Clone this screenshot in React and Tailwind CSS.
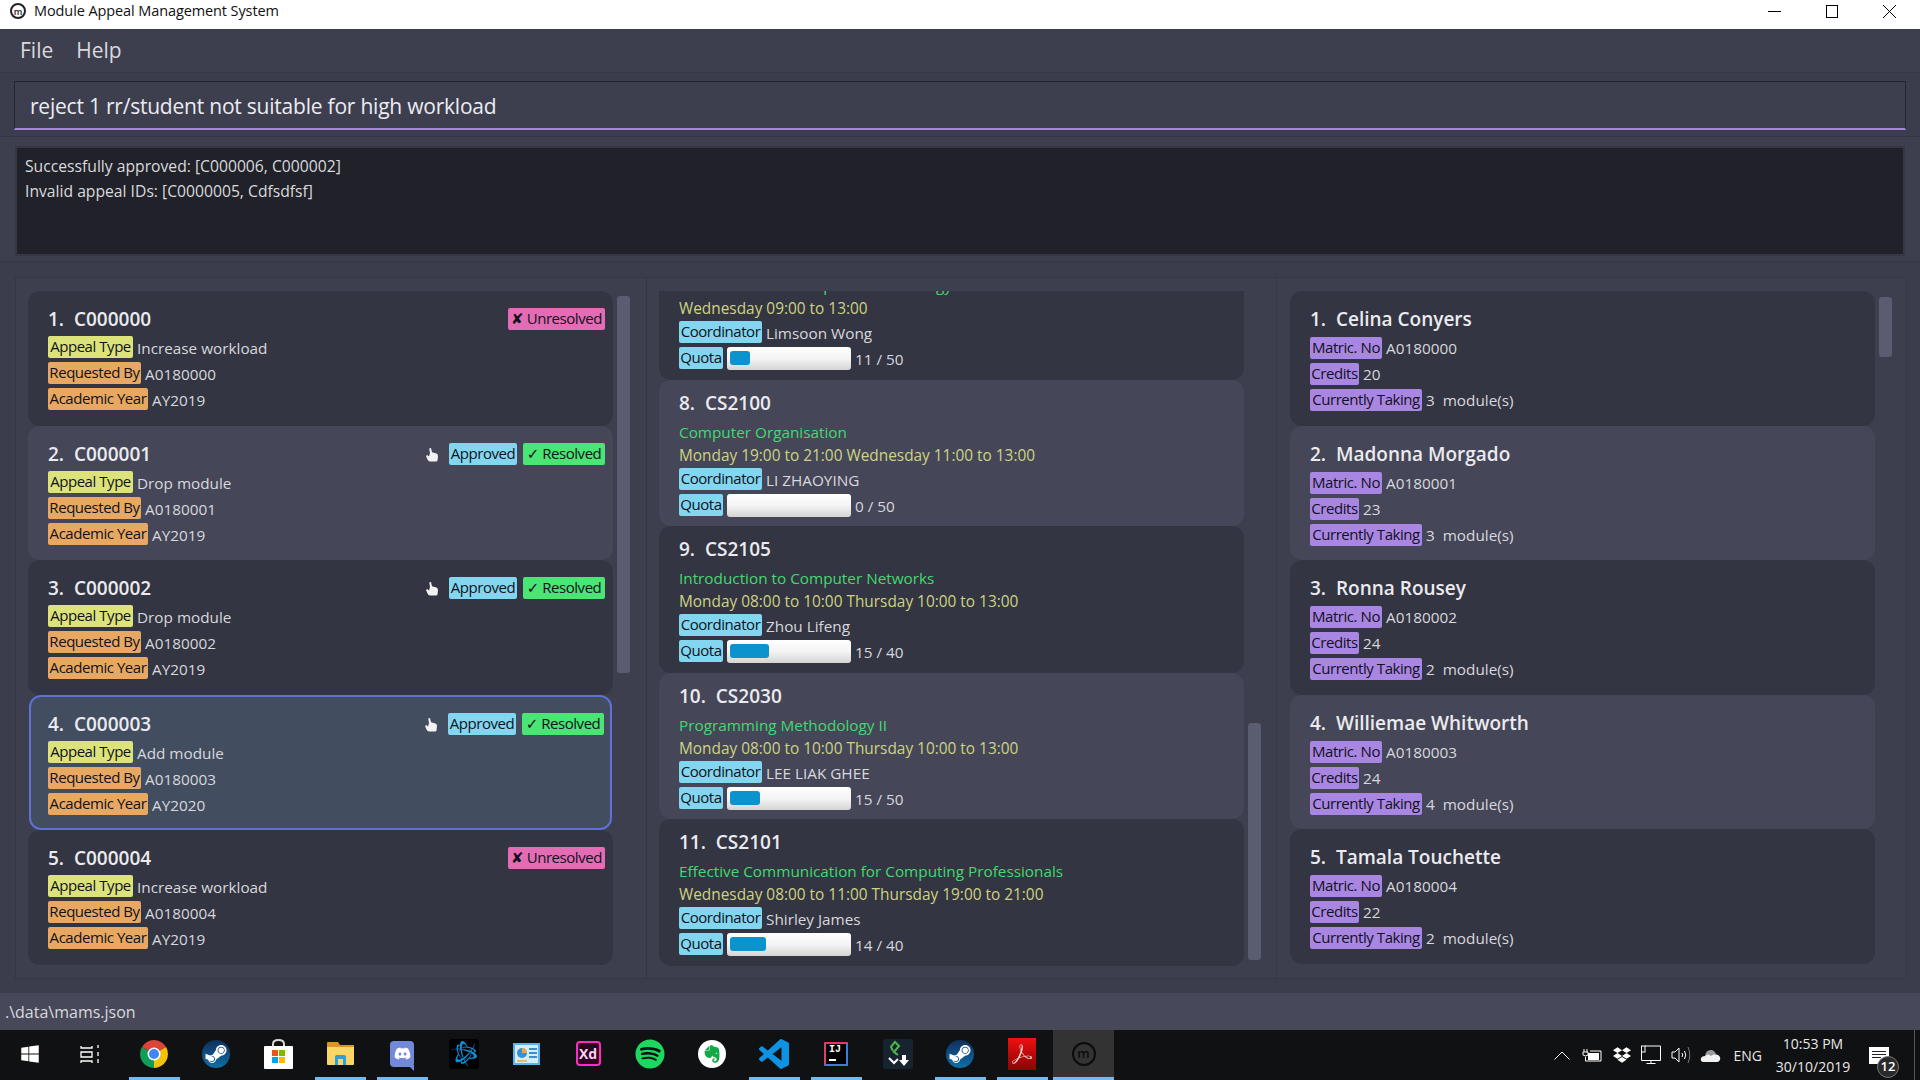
import React from 'react';
import { FaWindows, FaSteamSymbol, FaDiscord, FaBattleNet, FaSpotify, FaEvernote, FaDropbox } from 'react-icons/fa6';
import { SiAdobeacrobatreader } from 'react-icons/si';

const APPEALS = [
  { id: 'C000000', type: 'Increase workload', by: 'A0180000', year: 'AY2019', approved: false },
  { id: 'C000001', type: 'Drop module', by: 'A0180001', year: 'AY2019', approved: true },
  { id: 'C000002', type: 'Drop module', by: 'A0180002', year: 'AY2019', approved: true },
  { id: 'C000003', type: 'Add module', by: 'A0180003', year: 'AY2020', approved: true, selected: true },
  { id: 'C000004', type: 'Increase workload', by: 'A0180004', year: 'AY2019', approved: false }
];

const MODULES = [
  { no: 7, code: 'CS2220', name: 'Introduction to Computational Biology', time: 'Wednesday 09:00 to 13:00', lead: 'Limsoon Wong', quota: '11 / 50', fill: 20 },
  { no: 8, code: 'CS2100', name: 'Computer Organisation', time: 'Monday 19:00 to 21:00 Wednesday 11:00 to 13:00', lead: 'LI ZHAOYING', quota: '0 / 50', fill: 0 },
  { no: 9, code: 'CS2105', name: 'Introduction to Computer Networks', time: 'Monday 08:00 to 10:00 Thursday 10:00 to 13:00', lead: 'Zhou Lifeng', quota: '15 / 40', fill: 39 },
  { no: 10, code: 'CS2030', name: 'Programming Methodology II', time: 'Monday 08:00 to 10:00 Thursday 10:00 to 13:00', lead: 'LEE LIAK GHEE', quota: '15 / 50', fill: 30 },
  { no: 11, code: 'CS2101', name: 'Effective Communication for Computing Professionals', time: 'Wednesday 08:00 to 11:00 Thursday 19:00 to 21:00', lead: 'Shirley James', quota: '14 / 40', fill: 36 }
];

const STUDENTS = [
  { name: 'Celina Conyers', matric: 'A0180000', credits: 20, taking: 3 },
  { name: 'Madonna Morgado', matric: 'A0180001', credits: 23, taking: 3 },
  { name: 'Ronna Rousey', matric: 'A0180002', credits: 24, taking: 2 },
  { name: 'Williemae Whitworth', matric: 'A0180003', credits: 24, taking: 4 },
  { name: 'Tamala Touchette', matric: 'A0180004', credits: 22, taking: 2 }
];

const Tag = ({ className, children }) => (
  <span className={`h-[22px] shrink-0 rounded-[2px] text-center text-[15px] leading-[21px] tracking-[-0.45px] whitespace-nowrap text-[#10121c] ${className}`}>
    {children}
  </span>
);

const Row = ({ tag, tagClass, value, valueClass = 'pt-[1px]' }) => (
  <div className="flex h-[22px] gap-[4px]">
    <Tag className={tagClass}>{tag}</Tag>
    <span className={`text-[15.3px] leading-[22px] whitespace-pre text-[#d8d8dc] ${valueClass}`}>{value}</span>
  </div>
);

const Title = ({ no, text }) => (
  <div className="text-[19px] leading-[24px] font-semibold whitespace-pre text-[#ebebef]">{`${no}.  ${text}`}</div>
);

const HandIcon = () => (
  <svg width="14" height="14" viewBox="0 0 14 14" className="mt-[5px] mr-[4px]">
    <path fill="#f2f2f2" d="M4.2 0.5 L6 0 L7 4.3 L11.5 5.5 Q13 6 13 8 L12.5 12.5 Q12.3 13.5 11 13.5 L5 13.5 Q3.5 13.5 2.5 11.5 L1 8 L2.2 7 L4 8.5 L5 5 Z" />
  </svg>
);

const AppealCard = ({ appeal, no }) => {
  const stripe = no % 2 === 1 ? 'bg-[#333542]' : 'bg-[#454759]';
  return (
    <div className={`shrink-0 rounded-[12px] ${
      appeal.selected
        ? 'mx-[1px] mt-[0.5px] h-[135px] border-2 border-[#5f70d8] bg-[#424e60] pt-[16px] pr-[6px] pl-[17px]'
        : `h-[134.5px] ${stripe} pt-[17px] pr-[8px] pl-[20px]`
    }`}>
      <div className="flex h-[22px] items-center justify-between">
        <Title no={no} text={appeal.id} />
        {appeal.approved ? (
          <div className="flex items-start gap-[6px]">
            <HandIcon />
            <Tag className="w-[68px] bg-[#82d6ef]">Approved</Tag>
            <Tag className="w-[82px] bg-[#4ae574]">✓ Resolved</Tag>
          </div>
        ) : (
          <Tag className="w-[97px] bg-[#e46cb4]">✘ Unresolved</Tag>
        )}
      </div>
      <div className="mt-[6px] flex flex-col gap-[4px]">
        <Row tag="Appeal Type" tagClass="w-[85px] bg-[#dde37b]" value={appeal.type} />
        <Row tag="Requested By" tagClass="w-[93px] bg-[#e8a862]" value={appeal.by} />
        <Row tag="Academic Year" tagClass="w-[100px] bg-[#e8a862]" value={appeal.year} />
      </div>
    </div>
  );
};

const ModuleCard = ({ mod }) => (
  <div className={`h-[146.5px] shrink-0 rounded-[12px] pt-[11px] pl-[20px] ${mod.no % 2 === 1 ? 'bg-[#333542]' : 'bg-[#454759]'}`}>
    <Title no={mod.no} text={mod.code} />
    <div className="mt-[5px] text-[15.3px] leading-[24px] text-[#43d96f]">{mod.name}</div>
    <div className="text-[15.4px] leading-[24px] text-[#cdd381]">{mod.time}</div>
    <div className="flex flex-col gap-[4px]">
      <Row tag="Coordinator" tagClass="w-[83px] bg-[#82d6ef]" value={mod.lead} />
      <div className="flex h-[22px] gap-[4px]">
        <Tag className="w-[44px] bg-[#82d6ef]">Quota</Tag>
        <div className="h-[23px] w-[124px] shrink-0 rounded-[3px] bg-gradient-to-b from-[#ffffff] via-[#f4f4f4] to-[#d4d4d4] px-[3px] pt-[4px]">
          <div className="h-[14px] rounded-[3px] bg-[#0a93cc]" style={{ width: mod.fill }} />
        </div>
        <span className="pt-[1px] text-[15.3px] leading-[22px] whitespace-pre text-[#d8d8dc]">{mod.quota}</span>
      </div>
    </div>
  </div>
);

const StudentCard = ({ student, no }) => (
  <div className={`h-[134.5px] shrink-0 rounded-[12px] pt-[16px] pl-[20px] ${no % 2 === 1 ? 'bg-[#333542]' : 'bg-[#454759]'}`}>
    <div className="flex h-[24px] items-center"><Title no={no} text={student.name} /></div>
    <div className="mt-[6px] flex flex-col gap-[4px]">
      <Row tag="Matric. No" tagClass="w-[72px] bg-[#aa86e3]" value={student.matric} valueClass="pt-0" />
      <Row tag="Credits" tagClass="w-[49px] bg-[#aa86e3]" value={student.credits} valueClass="pt-0" />
      <Row tag="Currently Taking" tagClass="w-[112px] bg-[#aa86e3]" value={`${student.taking}  module(s)`} valueClass="pt-0" />
    </div>
  </div>
);

const Thumb = ({ className }) => <div className={`w-[13px] shrink-0 rounded-[3px] bg-[#5a5c70] ${className}`} />;

const MIcon = ({ size, color, text }) => (
  <span className={`flex items-center justify-center rounded-full border-2 font-semibold ${size} ${color} ${text}`}>m</span>
);

// taskbar icons
const ChromeIcon = () => (
  <svg width="28" height="28" viewBox="0 0 28 28">
    <path fill="#db4437" d="M14 14 L1.9 7 A14 14 0 0 1 26.1 7 Z" />
    <path fill="#f4c20d" d="M14 14 L26.1 7 A14 14 0 0 1 14 28 Z" />
    <path fill="#0f9d58" d="M14 14 L14 28 A14 14 0 0 1 1.9 7 Z" />
    <circle cx="14" cy="14" r="6.5" fill="#fff" />
    <circle cx="14" cy="14" r="5" fill="#4285f4" />
  </svg>
);

const SteamIcon = () => (
  <span className="flex h-[28px] w-[28px] items-center justify-center rounded-full bg-gradient-to-b from-[#0f2f5c] to-[#0f6fa8]">
    <FaSteamSymbol className="h-[24px] w-[26px] text-white" />
  </span>
);

const StoreIcon = () => (
  <svg width="29" height="30" viewBox="0 0 29 30">
    <path fill="none" stroke="#d8d8d8" strokeWidth="2" d="M9 8 V5 Q9 1 14.5 1 Q20 1 20 5 V8" />
    <rect x="0" y="7" width="29" height="23" rx="1" fill="#fff" />
    <rect x="8" y="11" width="6" height="6" fill="#f25022" />
    <rect x="15" y="11" width="6" height="6" fill="#7fba00" />
    <rect x="8" y="18" width="6" height="6" fill="#00a4ef" />
    <rect x="15" y="18" width="6" height="6" fill="#ffb900" />
  </svg>
);

const FolderIcon = () => (
  <svg width="27" height="24" viewBox="0 0 27 24">
    <path fill="#d99a1c" d="M0 1 Q0 0 1 0 H11 L13 3 H27 V8 H0 Z" />
    <path fill="#fbd665" d="M0 5 H27 V22 Q27 23 26 23 H1 Q0 23 0 22 Z" />
    <path fill="#2b9fe0" d="M8 23 V15 Q8 13 10 13 H17 Q19 13 19 15 V23 H16 V17 H11 V23 Z" />
  </svg>
);

const DiscordIcon = () => (
  <span className="relative flex h-[26px] w-[24px] items-center justify-center rounded-[4px] bg-[#7289da]">
    <FaDiscord className="h-[17px] w-[17px] text-white" />
    <span className="absolute top-[24px] right-0 h-0 w-0 border-t-[6px] border-l-[6px] border-t-[#7289da] border-l-transparent" />
  </span>
);

const BlizzardIcon = () => (
  <span className="flex h-[30px] w-[30px] items-center justify-center rounded-[3px] bg-black">
    <FaBattleNet className="h-[26px] w-[26px] text-[#0f8fd8]" />
  </span>
);

const ControlIcon = () => (
  <svg width="27" height="22" viewBox="0 0 27 22">
    <rect width="27" height="22" fill="#56b4e9" />
    <rect x="2" y="2" width="23" height="18" fill="#d3eefa" />
    <circle cx="9" cy="10" r="5" fill="#3a8fd0" />
    <path fill="#f2a63a" d="M9 10 V5 A5 5 0 0 1 14 10 Z" />
    <path stroke="#3a8fd0" strokeWidth="2" d="M16 6 H24 M16 10 H24 M16 14 H24" />
    <path stroke="#f2a63a" strokeWidth="1.5" d="M4 18 H14" />
  </svg>
);

const XdIcon = () => (
  <span className="flex h-[25px] w-[25px] items-center justify-center rounded-[4px] border-2 border-[#ff2bc2] bg-[#2e001f] text-[14px] font-bold text-[#ffd0f2]">Xd</span>
);

const EvernoteIcon = () => (
  <span className="flex h-[28px] w-[28px] items-center justify-center rounded-full bg-white">
    <FaEvernote className="h-[20px] w-[20px] text-[#15a846]" />
  </span>
);

const VscodeIcon = () => (
  <svg width="30" height="30" viewBox="0 0 24 24" fill="#0e92e4">
    <path d="M23.15 2.587L18.21.21a1.494 1.494 0 0 0-1.705.29l-9.46 8.63-4.12-3.128a.999.999 0 0 0-1.276.057L.327 7.261A1 1 0 0 0 .326 8.74L3.899 12 .326 15.26a1 1 0 0 0 .001 1.479L1.65 17.94a.999.999 0 0 0 1.276.057l4.12-3.128 9.46 8.63a1.492 1.492 0 0 0 1.704.29l4.942-2.377A1.5 1.5 0 0 0 24 20.06V3.939a1.5 1.5 0 0 0-.85-1.352zm-5.146 14.861L10.826 12l7.178-5.448v10.896z" />
  </svg>
);

const IntellijIcon = () => (
  <span className="flex h-[24px] w-[24px] flex-col rounded-[1px] border-2 border-[#3e7ad8] border-t-[#e8365e] border-l-[#d8406e] bg-black px-[3px] font-['Liberation_Mono',monospace] text-[10px] leading-[11px] font-bold text-white">
    IJ
    <span className="mt-[4px] h-[2px] w-[7px] bg-white" />
  </span>
);

const GitIcon = () => (
  <span className="flex h-[30px] w-[30px] items-center justify-center rounded-[3px] bg-[#172430]">
    <svg width="24" height="28" viewBox="0 0 24 28" fill="none" strokeWidth="2">
      <path stroke="#4eb749" d="M7 11 L5 7 L9 2 L13 6 L8 12 L12 15" />
      <path stroke="#fff" d="M3 18 L8 23 L12 19" />
      <path fill="#fff" d="M16 15 H20 V20 H23 L18 26 L13 20 H16 Z" />
    </svg>
  </span>
);

const AcrobatIcon = () => (
  <span className="flex h-[32px] w-[28px] items-center justify-center bg-gradient-to-b from-[#f01010] to-[#8a0505]">
    <SiAdobeacrobatreader className="h-[20px] w-[20px] text-[#f8d8d8]" />
  </span>
);

const TASKS = [
  { key: 'chrome', icon: <ChromeIcon />, bar: true },
  { key: 'steam', icon: <SteamIcon /> },
  { key: 'store', icon: <StoreIcon /> },
  { key: 'folder', icon: <FolderIcon />, bar: true },
  { key: 'discord', icon: <DiscordIcon />, bar: true },
  { key: 'blizzard', icon: <BlizzardIcon /> },
  { key: 'control', icon: <ControlIcon /> },
  { key: 'xd', icon: <XdIcon /> },
  { key: 'spotify', icon: <FaSpotify className="h-[30px] w-[30px] text-[#1ed760]" /> },
  { key: 'evernote', icon: <EvernoteIcon /> },
  { key: 'vscode', icon: <VscodeIcon />, bar: true },
  { key: 'intellij', icon: <IntellijIcon />, bar: true },
  { key: 'git', icon: <GitIcon /> },
  { key: 'steam2', icon: <SteamIcon />, bar: true },
  { key: 'acrobat', icon: <AcrobatIcon />, bar: true }
];

const TaskCell = ({ icon, bar }) => (
  <div className="flex h-[50px] w-[62px] shrink-0 flex-col items-center">
    <div className="flex h-[47px] items-center justify-center">{icon}</div>
    {bar && <div className="h-[3px] w-[51px] bg-[#76b9ed]" />}
  </div>
);

const App = () => {
  return (
    <div className="flex h-[1080px] w-[1920px] flex-col overflow-hidden bg-[#3b3d4c] font-['Open_Sans','DejaVu_Sans',sans-serif]">
      {/* window title bar */}
      <div className="flex h-[29px] shrink-0 items-center bg-white pr-[24px] pb-[7px] pl-[10px]">
        <MIcon size="h-[16px] w-[16px]" color="border-[#222] text-[#222]" text="text-[9px] leading-none" />
        <span className="ml-[8px] text-[14.5px] tracking-[-0.1px] text-[#111]">Module Appeal Management System</span>
        <div className="ml-auto flex items-center gap-[45px]">
          <div className="h-px w-[13px] bg-black" />
          <div className="h-[13px] w-[12px] border border-black" />
          <svg width="13" height="13" viewBox="0 0 13 13"><path stroke="#000" d="M0 0 L13 13 M13 0 L0 13" /></svg>
        </div>
      </div>

      {/* menu */}
      <div className="flex h-[44px] shrink-0 items-center gap-[23px] border-b border-[#353744] bg-[#3d3f4f] pl-[20px] text-[21px] text-[#d9d9de]">
        <span>File</span>
        <span>Help</span>
      </div>

      {/* command box */}
      <div className="h-[64px] shrink-0 border-b border-[#353744] pt-[8px] pr-[14px] pl-[14px]">
        <div className="flex h-[49px] items-center border border-b-2 border-[#23252f] border-b-[#a685e2] bg-[#3d3f4f] pt-[3px] pl-[15px] text-[21px] tracking-[-0.22px] text-[#ececf0]">
          reject 1 rr/student not suitable for high workload
        </div>
      </div>

      {/* result box */}
      <div className="h-[125px] shrink-0 border-b border-[#353744] bg-[#3d3f4f] pt-[9px] pr-[15px] pl-[15px]">
        <div className="h-[110px] border-2 border-[#353744] bg-[#212229] pt-[6px] pl-[8px] text-[15.7px] leading-[25px] text-[#d9d9de]">
          <div>Successfully approved: [C000006, C000002]</div>
          <div>Invalid appeal IDs: [C0000005, Cdfsdfsf]</div>
        </div>
      </div>

      {/* lists */}
      <div className="min-h-0 flex-1 pt-[15px] pr-[13px] pb-[14px] pl-[15px]">
        <div className="flex h-full border border-[#353744] bg-[#3d3f4f]">
          <div className="flex w-[631px] shrink-0 gap-[4px] border-r border-[#353744] pt-[13px] pl-[12px]">
            <div className="flex h-[674px] w-[585px] flex-col overflow-hidden">
              {APPEALS.map((a, i) => <AppealCard key={a.id} appeal={a} no={i + 1} />)}
            </div>
            <Thumb className="mt-[5px] h-[377px]" />
          </div>
          <div className="flex w-[630px] shrink-0 gap-[4px] border-r border-[#353744] pt-[13px] pl-[12px]">
            <div className="flex h-[674.5px] w-[585px] flex-col justify-end overflow-hidden">
              {MODULES.map((m) => <ModuleCard key={m.code} mod={m} />)}
            </div>
            <Thumb className="mt-[432px] h-[237px]" />
          </div>
          <div className="flex flex-1 gap-[4px] pt-[13px] pl-[13px]">
            <div className="flex h-[674px] w-[585px] flex-col overflow-hidden">
              {STUDENTS.map((s, i) => <StudentCard key={s.matric} student={s} no={i + 1} />)}
            </div>
            <Thumb className="mt-[6px] h-[60px]" />
          </div>
        </div>
      </div>

      {/* status bar */}
      <div className="flex h-[37px] shrink-0 items-center bg-[#474859] pl-[5px] text-[16px] text-[#d9d9de]">.\data\mams.json</div>

      {/* taskbar */}
      <div className="flex h-[50px] shrink-0 items-start bg-[#101112]">
        <div className="flex h-[47px] w-[60px] items-center justify-center"><FaWindows className="h-[20px] w-[20px] text-white" /></div>
        <div className="flex h-[47px] w-[60px] items-center justify-center">
          <svg width="20" height="20" viewBox="0 0 20 20" fill="none" stroke="#fff" strokeWidth="1.3">
            <path d="M1 2 V4 H12 V2 M1 8 H12 V13 H1 Z M1 19 V17 H12 V19 M18 1 V4 M18 8 V12 M18 15 V19" />
          </svg>
        </div>
        <div className="flex pl-[3px]">
          {TASKS.map((t) => <TaskCell key={t.key} icon={t.icon} bar={t.bar} />)}
          <div className="flex h-[50px] w-[61px] shrink-0 flex-col items-center bg-[#333333]">
            <div className="flex h-[47px] items-center justify-center">
              <MIcon size="h-[24px] w-[24px]" color="border-[#0c0c0c] text-[#0c0c0c]" text="text-[13px] leading-none" />
            </div>
            <div className="h-[3px] w-full bg-[#76b9ed]" />
          </div>
        </div>

        {/* tray */}
        <div className="ml-auto flex h-[50px] items-center pr-[5px] text-white">
          <svg width="16" height="9" viewBox="0 0 16 9" className="mr-[12px]"><path fill="none" stroke="#fff" d="M0.5 8.5 L8 1 L15.5 8.5" /></svg>
          <svg width="20" height="14" viewBox="0 0 20 14" className="mr-[11px]">
            <path fill="none" stroke="#fff" d="M2 1 V4 M5 1 V4 M1 4 H6 V7 Q3.5 9 1 7 Z M3.5 9 V13 H19 V3 H8" />
            <rect x="6" y="5" width="11" height="7" fill="#fff" />
          </svg>
          <FaDropbox className="mr-[10px] h-[18px] w-[18px]" />
          <svg width="20" height="20" viewBox="0 0 20 20" className="mr-[10px]" fill="none" stroke="#fff">
            <path d="M4 1 H19.5 V15.5 H0.5 V7 M10 15.5 V18.5 M5.5 18.5 H14.5" />
            <rect x="0.5" y="1" width="3.5" height="6" />
          </svg>
          <svg width="20" height="18" viewBox="0 0 20 18" className="mr-[9px]" fill="none" stroke="#fff">
            <path d="M1 6 H4 L8 2 V16 L4 12 H1 Z M11 7 Q12.5 9 11 11 M13.5 5 Q16 9 13.5 13" />
            <path stroke="#777" d="M17 1 Q20.5 9 17 17" />
          </svg>
          <svg width="21" height="15" viewBox="0 0 21 15" className="mr-[13px]">
            <path fill="#9a9a9a" d="M5 8 Q6 1 12 2 Q15 3 16 6 L12 8 L7 10 Z" />
            <path fill="#f2f2f2" d="M3 14 Q0 13 1 10 Q2 8 5 8 Q8 5 11 8 Q14 5 18 7 Q21 9 20 12 Q19 14 17 14 Z" />
          </svg>
          <span className="mr-[13px] text-[14px] text-[#e8e8e8]">ENG</span>
          <div className="mr-[18px] flex w-[76px] flex-col items-center text-[14px] leading-[23px] text-[#e8e8e8]">
            <span>10:53 PM</span>
            <span>30/10/2019</span>
          </div>
          <div className="relative mr-[25px] h-[17px] w-[20px] bg-white pt-[4px] pl-[3px]">
            <div className="mb-[2px] h-px w-[14px] bg-[#222]" />
            <div className="mb-[2px] h-px w-[14px] bg-[#222]" />
            <div className="h-px w-[9px] bg-[#222]" />
            <span className="absolute top-[9px] left-[8px] flex h-[22px] w-[22px] items-center justify-center rounded-full border border-[#777] bg-[#2a2a2a] text-[13px] font-semibold text-white">12</span>
          </div>
          <div className="h-[50px] w-px bg-[#555]" />
        </div>
      </div>
    </div>
  );
};

export default App;
